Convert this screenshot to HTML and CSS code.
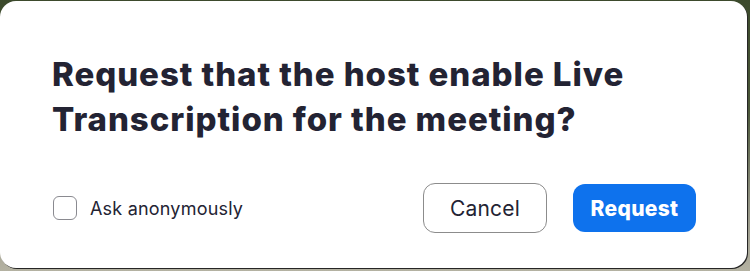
FILE: index.html
```html
<!DOCTYPE html>
<html lang="en">
<head>
<meta charset="utf-8">
<title>Request Live Transcription</title>
<link rel="stylesheet" href="styles.css">
</head>
<body>
<div class="dialog">
  <h1 class="title">Request that the host enable Live Transcription for the meeting?</h1>
  <div class="footer">
    <label class="check">
      <span class="box"></span>
      <span class="check-label">Ask anonymously</span>
    </label>
    <div class="actions">
      <button class="btn btn-cancel">Cancel</button>
      <button class="btn btn-primary">Request</button>
    </div>
  </div>
</div>
</body>
</html>
```
FILE: styles.css
```css
html, body {
  margin: 0;
  padding: 0;
}
body {
  width: 750px;
  height: 271px;
  overflow: hidden;
  background: linear-gradient(to bottom, #3c4a2c 0%, #4a5638 40%, #8f9080 75%, #b4b2a2 100%);
  font-family: Inter, "Noto Sans", sans-serif;
}
.dialog {
  box-sizing: border-box;
  width: 747px;
  height: 267px;
  margin-top: 1px;
  background: #ffffff;
  border-radius: 16px;
  box-shadow: 1px 1px 0 #262626;
  padding: 51px 51px 0 52px;
}
.title {
  margin: 0;
  font-size: 33px;
  line-height: 45px;
  font-weight: 800;
  color: #232333;
  letter-spacing: 0.95px;
}
.footer {
  margin-top: 41px;
  display: flex;
  align-items: center;
  justify-content: space-between;
}
.check {
  display: flex;
  align-items: center;
  gap: 13px;
  padding-left: 1px;
}
.box {
  box-sizing: border-box;
  width: 24px;
  height: 24px;
  border: 1.5px solid #8a8a90;
  border-radius: 6px;
  background: #fff;
}
.check-label {
  font-size: 18px;
  color: #232333;
  letter-spacing: 0.2px;
}
.actions {
  display: flex;
  align-items: center;
  gap: 26px;
}
.btn {
  font-family: Inter, "Noto Sans", sans-serif;
  font-size: 21px;
  border-radius: 12px;
  cursor: pointer;
  padding: 0;
}
.btn-cancel {
  width: 124px;
  height: 50px;
  background: #fff;
  border: 1.5px solid #8c8c8c;
  color: #232333;
  font-weight: 400;
  letter-spacing: 0.15px;
}
.btn-primary {
  width: 123px;
  height: 48px;
  background: #0e72ed;
  border: none;
  color: #fff;
  font-weight: 800;
  letter-spacing: 0.3px;
}
```
